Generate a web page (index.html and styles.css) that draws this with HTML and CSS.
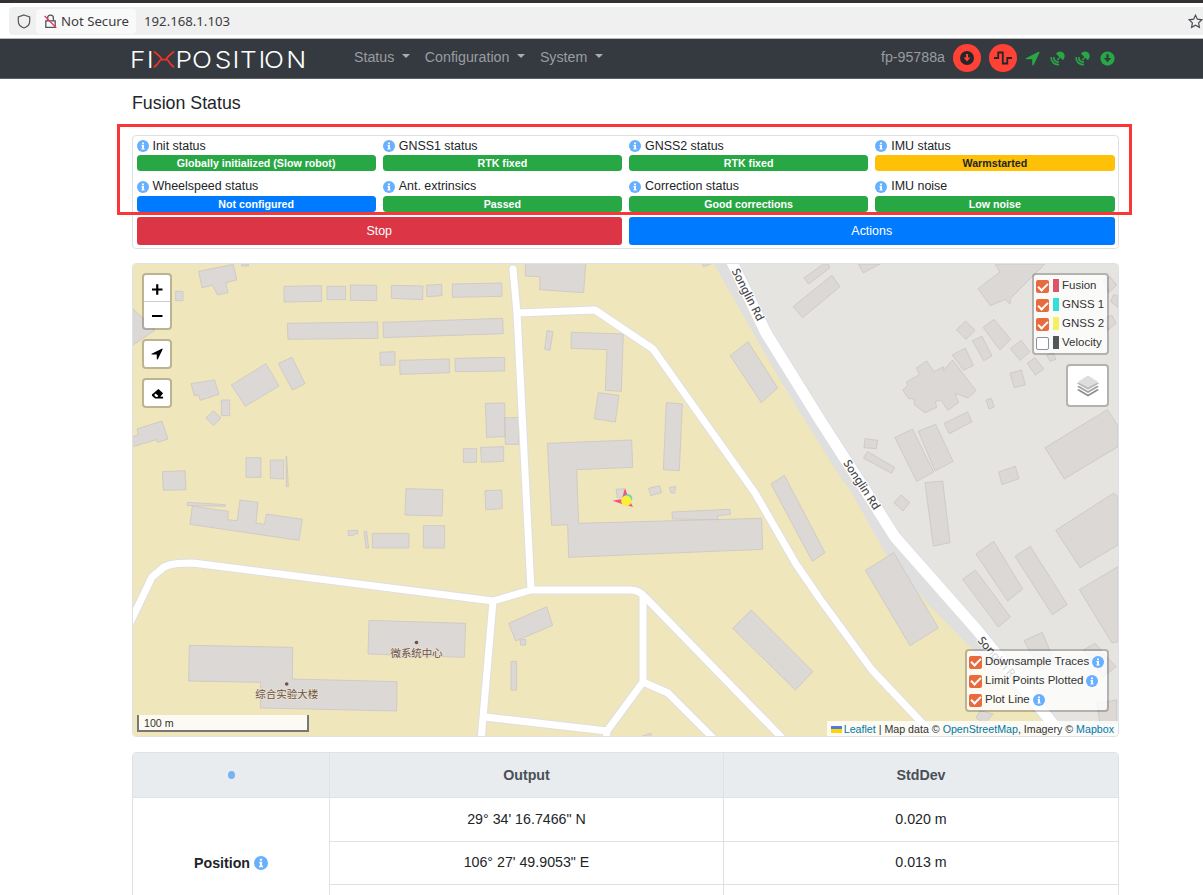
FILE: index.html
```html
<!DOCTYPE html>
<html lang="en">
<head>
<meta charset="utf-8">
<title>Fusion Status</title>
<link rel="stylesheet" href="styles.css">
</head>
<body>
<svg class="defs" aria-hidden="true">
  <symbol id="info" viewBox="0 0 16 16"><circle cx="8" cy="8" r="8" fill="#66b0ff"/><path d="M6.7 3.2h2.6v2.3H6.7zM6 6.7h3.3v4.5h.9v1.6H5.8v-1.6h1V8.3H6z" fill="#fff"/></symbol>
  <symbol id="dish" viewBox="0 0 16 16"><path d="M6.400 3C8.200.2 12 0 14.200 1.800c2 2.200 2 5.400-.4 8L10.900 7.200 9.600 8.500c.2 1-1 1.700-1.700 1-.7-.8-.1-1.800.8-1.700L9.900 6.400z"/><path d="M1.200 6.500c-.3 4.800 3.300 8.400 8.300 8.100M4 6.500c0 3.300 2.200 5.400 5.500 5.400" fill="none" stroke="currentColor" stroke-width="1.800"/></symbol>
  <symbol id="plane" viewBox="0 0 16 16"><path d="M.8 7.800 14.400.9c.8-.3 1.300.2 1 1L9.300 14.800c-.4.900-1.600.7-1.600-.3V8.800H1.800C.6 8.800.1 8.100.8 7.800z"/></symbol>
</svg>

<header class="browser">
  <div class="urlbar">
    <svg class="shield" viewBox="0 0 14 15"><path d="M7 1 12.700 3v4.200c0 3-2.200 5.500-5.700 6.800-3.500-1.300-5.700-3.800-5.700-6.800V3z" fill="none" stroke="#55555a" stroke-width="1.200"/></svg>
    <div class="secure">
      <svg class="lock" viewBox="0 0 13 15"><path d="M1.800 6.800h9.400v6.500H1.800zM3.600 6.800V4a2.900 2.900 0 0 1 5.800 0v2.800" fill="none" stroke="#55555a" stroke-width="1.300"/><path d="M.6 2 12.300 13.800" stroke="#e8395f" stroke-width="1.300"/></svg>
      <span>Not Secure</span>
    </div>
    <span class="address">192.168.1.103</span>
    <svg class="star" viewBox="0 0 15 15"><path d="m7.500 1.200 1.900 4 4.400.6-3.200 3.100.8 4.400-3.900-2.100-3.900 2.100.8-4.400L1.200 5.800l4.400-.6z" fill="none" stroke="#4c4c52" stroke-width="1.200"/></svg>
  </div>
</header>

<nav class="navbar">
  <svg class="logo" viewBox="0 0 176 20" width="176" height="20">
    <text class="logo-text" transform="scale(1.120 1)" y="17.500" x="-.900 14">FI</text>
    <path d="M23 1.500c6.500 5.300 9 8.300 7 8.300s0 2-7 7.400M43 1.500c-6.500 5.300-9 8.300-7 8.300s0 2 7 7.400M29.500 9.600h7" fill="none" stroke="#f0322a" stroke-width="1.800"/>
    <text class="logo-text" transform="scale(1.120 1)" y="17.500" x="39.700 54.400 74.800 90.600 97.300 113.900 118.700 138.700">POSITION</text>
  </svg>
  <ul class="menu">
    <li>Status<i class="caret"></i></li>
    <li>Configuration<i class="caret"></i></li>
    <li>System<i class="caret"></i></li>
  </ul>
  <div class="device">
    <span class="host">fp-95788a</span>
    <span class="alert"><svg viewBox="0 0 16 16" width="14" height="14"><circle cx="8" cy="8" r="8" fill="#23272b"/><path d="M6.800 3.500h2.400v4h2.700L8 12 4.100 7.500h2.700z" fill="#ff4136"/></svg></span>
    <span class="alert"><svg viewBox="0 0 18 14" width="18" height="14"><path d="M0 7h4.200V1.500h4.600v11h4.500V7H18" fill="none" stroke="#23272b" stroke-width="1.800"/></svg></span>
    <svg class="ok" width="15" height="15"><use href="#plane"/></svg>
    <svg class="ok" width="15" height="15"><use href="#dish"/></svg>
    <svg class="ok" width="15" height="15"><use href="#dish"/></svg>
    <svg class="ok" viewBox="0 0 16 16" width="15" height="15"><circle cx="8" cy="8" r="7.600"/><path d="M6.800 3.500h2.400v4h2.700L8 12 4.100 7.500h2.700z" fill="#343a40"/></svg>
  </div>
</nav>

<main class="container">
  <h1 class="title">Fusion Status</h1>

  <section class="card status">
    <div class="grid">
      <div class="cell"><p class="label"><svg class="info"><use href="#info"/></svg>Init status</p><span class="badge green">Globally initialized (Slow robot)</span></div>
      <div class="cell"><p class="label"><svg class="info"><use href="#info"/></svg>GNSS1 status</p><span class="badge green">RTK fixed</span></div>
      <div class="cell"><p class="label"><svg class="info"><use href="#info"/></svg>GNSS2 status</p><span class="badge green">RTK fixed</span></div>
      <div class="cell"><p class="label"><svg class="info"><use href="#info"/></svg>IMU status</p><span class="badge yellow">Warmstarted</span></div>
      <div class="cell"><p class="label"><svg class="info"><use href="#info"/></svg>Wheelspeed status</p><span class="badge blue">Not configured</span></div>
      <div class="cell"><p class="label"><svg class="info"><use href="#info"/></svg>Ant. extrinsics</p><span class="badge green">Passed</span></div>
      <div class="cell"><p class="label"><svg class="info"><use href="#info"/></svg>Correction status</p><span class="badge green">Good corrections</span></div>
      <div class="cell"><p class="label"><svg class="info"><use href="#info"/></svg>IMU noise</p><span class="badge green">Low noise</span></div>
    </div>
    <div class="buttons">
      <button class="btn red">Stop</button>
      <button class="btn blue">Actions</button>
    </div>
    <div class="highlight"></div>
  </section>

  <section class="map">
    <svg class="tiles" viewBox="133 264 985 473">
      <rect x="133" y="264" width="985" height="473" fill="#f0e6bc"/>
      <path d="M714 264 778 377 840 477 850 490 885 553 927 603 970 647 1062 740H1120V262z" fill="#dfdfdf"/>
      <path d="M733 262 766 333 820 420 867 493 895 537 977 630 1070 740H1120V262z" fill="#e5e4e0"/>
      <g class="bld" transform="translate(130 260) scale(.33333)">
        <path d="M206 34 310 13 320 60 288 68 294 98 262 105 248 76 216 83zM335 12h20v6h-20zM137 94h22v28h-22zM8 145 75 210 8 256zM462 79 575 77V124L462 126zM591 79h56v40h-56zM661 75 740 76V122L661 121zM784 76 879 78 878 119 784 115zM889 76 935 73 936 107 891 110zM967 72 1115 69 1116 109 967 112zM472 190 743 186 744 235 474 238zM759 187 1118 175 1120 221 760 233zM750 277 795 275V315L751 316zM809 301 958 297 959 338 810 343zM975 295 1124 292V333L976 335z"/>
        <path d="M183 371 254 360 267 403 211 421 206 405 193 407zM304 375 408 311 447 378 346 439zM445 311 486 292 525 371 487 390zM274 420h25v47h-25zM228 474 250 452 273 474 251 497zM8 530 25 524 21 507 96 483 114 537 83 547 79 539 8 560zM348 593h45v59h-45zM421 600h40v57l-40-2zM468 588h2l5 92h-6zM97 635 165 632 168 689 100 691zM1066 430 1124 429 1125 530 1070 532zM1124 473h42v80h-40zM1000 566h40v41h-40zM1052 562 1121 560V604L1054 607zM828 686 939 689 936 768 825 765zM1065 692 1115 690 1117 746 1067 749z"/>
      </g>
      <g class="bld" transform="translate(500 260) scale(.33333)">
        <path d="M76 10H257L251 98 119 89 120 50 76 48zM605 10h32l-27 10zM141 212 159 215 150 271 134 268zM214 217 370 222 364 394 316 391 321 269 213 265zM295 398 357 406 346 486 283 476zM499 428 547 432 538 632 490 629zM142 550 395 540 398 622 230 629 236 790 785 775 788 868 206 892 203 794 155 796zM348 688 372 686 374 710 352 714zM446 685 479 677 485 698 452 707zM508 682 527 680 524 699 513 699zM516 756 690 748 691 763 652 767 653 779 517 777zM691 287 744 245 833 384 784 428zM813 672 853 646 975 878 937 904zM912 54 970 12H985L989 24 926 72zM879 140 996 46 1020 80 908 173z"/>
      </g>
      <g class="bld" transform="translate(820 260) scale(.33333)">
        <path d="M115 12H180L130 39zM525 12H675L572 115 570 132 556 118 511 137 474 86 540 36zM409 209 437 183 465 211 438 238zM489 202 522 178 572 238 540 270zM457 242 486 229 516 288 491 302zM571 266 604 241 629 276 600 301zM397 285 436 264 460 316 431 331zM248 390 264 376 259 366 298 344 289 324 320 303 342 335 370 320V332L398 300 468 392 444 414 405 400 416 428 384 451 362 420 346 425 350 442 315 458 283 434V418L265 415zM622 310 645 293 671 327 646 345zM570 340 604 330 616 374 583 383zM680 285 700 278 708 298 690 304zM498 420 514 415 523 441 507 447zM372 490 443 456 456 485 388 521zM225 533 277 507 341 636 290 664zM295 514 347 493 399 604 345 633zM135 536 173 541 169 566 132 563zM130 594 143 575 224 622 215 640zM536 636 586 619 597 656 546 674zM675 563 862 449 894 498V560L733 657zM315 668 368 663 390 848 340 858zM850 60 870 50 890 75 866 98zM872 125 880 104 894 108V142zM855 175 875 165 888 190 862 212z"/>
      </g>
      <g class="bld" transform="translate(820 490) scale(.33333)">
        <path d="M222 38 243 15 269 37 249 63zM707 121 880 10 894 20V165L780 233zM778 299 894 230V455L876 459zM468 192 521 154 608 297 563 333zM585 199 631 169 742 344 697 374zM428 268 466 240 571 381 535 411zM612 452 667 427 705 520 660 540zM136 241 221 188 355 414 270 467zM790 480 825 460 888 530 850 560zM830 640 890 630V700H840zM480 662 520 672 494 700 468 684z"/>
      </g>
      <g class="bld" transform="translate(130 490) scale(.33333)">
        <path d="M172 37 286 44V49L188 47H172zM187 48 295 64 293 89 322 92 330 30 384 37 378 99 404 103 409 72 517 88 507 151 180 103zM655 121h28v11h-11l-2 5h-15zM702 124h8l6 50h-8zM727 130h110v44H727zM880 107h64v67h-64zM717 391 1007 400 1003 502 714 492zM178 466 488 472 487 567 801 575 800 663 391 654 392 577 176 573z"/>
      </g>
      <g class="bld" transform="translate(480 490) scale(.33333)">
        <path d="M86 400 200 350 218 406 107 453zM120 450 137 448V465H122zM93 514h17v86H93zM758 415 814 360 999 545 946 600zM482 740 512 730 514 740z"/>
      </g>
      <g class="casing">
        <path d="M513 269 517 313 531 590M517 313 595 310 653 349 755 493 796 564 820 599 872 670 923 724 940 742M130 623 152 577 164 567Q170 564 178 563.500L193 563 493 601 531 590 630 590Q639 590 645 597L785 741M493 601 481 741M485 717 607 731 606 741M643 597V682L607 731M643 682 668 693 716 741"/>
        <path class="main" d="M731 260 766 333 820 420 867 493 895 537 977 630 1066 740"/>
      </g>
      <g class="road">
        <path d="M513 269 517 313 531 590M517 313 595 310 653 349 755 493 796 564 820 599 872 670 923 724 940 742M130 623 152 577 164 567Q170 564 178 563.500L193 563 493 601 531 590 630 590Q639 590 645 597L785 741M493 601 481 741M485 717 607 731 606 741M643 597V682L607 731M643 682 668 693 716 741"/>
        <path class="main" d="M731 260 766 333 820 420 867 493 895 537 977 630 1066 740"/>
      </g>
      <g class="street">
        <text transform="translate(731.500 271) rotate(63)" textLength="57">Songlin Rd</text>
        <text transform="translate(843 463) rotate(57)" textLength="57">Songlin Rd</text>
        <text transform="translate(977 641) rotate(48)" textLength="57">Songlin Rd</text>
      </g>
      <g class="place">
        <circle cx="416.500" cy="642.500" r="1.800"/><text x="416.500" y="657" textLength="52">微系统中心</text>
        <circle cx="286.700" cy="684" r="1.800"/><text x="286.700" y="698" textLength="63">综合实验大楼</text>
      </g>
      <path d="M625 488 628.500 498 633 507 622 504 612.500 500.800 622 499z" fill="#f2557f"/>
      <circle cx="628" cy="498.500" r="4.300" fill="#5fd8c0"/>
      <circle cx="626.300" cy="500.700" r="5.200" fill="#f7ef3c"/>
    </svg>

    <div class="controls left">
      <div class="ctl zoom">
        <svg class="zoom-key" viewBox="0 0 26 26"><path d="M8 14.500h10.500M13.250 9.300v10.400" stroke="#000" stroke-width="2.200"/></svg>
        <svg class="zoom-key" viewBox="0 0 26 26"><path d="M8 14h10.500" stroke="#000" stroke-width="2.200"/></svg>
      </div>
      <div class="ctl key"><svg width="12" height="12"><use href="#plane"/></svg></div>
      <div class="ctl key"><svg viewBox="0 0 14 14" width="13" height="13"><path d="M8 2.200 13 6.700 10 10.500H13V12.500H4.500L1 9.300V8z"/><path d="M5 7 8 9.800 6.500 10.700H5.300L3.400 8.700z" fill="#fff"/></svg></div>
    </div>

    <div class="controls right">
      <div class="ctl legend">
        <div class="row"><i class="check on"></i><i class="swatch fusion"></i>Fusion</div>
        <div class="row"><i class="check on"></i><i class="swatch gnss1"></i>GNSS 1</div>
        <div class="row"><i class="check on"></i><i class="swatch gnss2"></i>GNSS 2</div>
        <div class="row"><i class="check"></i><i class="swatch velocity"></i>Velocity</div>
      </div>
      <div class="ctl layers">
        <svg viewBox="0 0 26 26" width="26" height="26"><path d="M2 17 13 11l11 6-11 6.500z" fill="#8d8d8d"/><path d="M2 15 13 9l11 6-11 6.500z" fill="#fff"/><path d="M2 13.800 13 8l11 5.800-11 6.300z" fill="#a3a3a3"/><path d="M2 11.600 13 6l11 5.600L13 18z" fill="#fff"/><path d="M2 10.400 13 3l11 7.400-11 6.300z" fill="#b9b9b9"/><path d="M2.500 9 13 2.500 23.500 9 13 14.500z" fill="#dedede"/></svg>
      </div>
    </div>

    <div class="controls bottom">
      <div class="ctl options">
        <div class="row"><i class="check on"></i>Downsample Traces<svg class="info"><use href="#info"/></svg></div>
        <div class="row"><i class="check on"></i>Limit Points Plotted<svg class="info"><use href="#info"/></svg></div>
        <div class="row"><i class="check on"></i>Plot Line<svg class="info"><use href="#info"/></svg></div>
      </div>
    </div>
    <div class="scale">100 m</div>
    <div class="attribution"><i class="flag"></i><a>Leaflet</a> | Map data © <a>OpenStreetMap</a>, Imagery © <a>Mapbox</a></div>
  </section>

  <table class="output">
    <thead><tr><th class="c1"><i class="dot"></i></th><th class="c2">Output</th><th>StdDev</th></tr></thead>
    <tbody>
      <tr><th rowspan="3" class="name">Position <svg class="info"><use href="#info"/></svg></th><td>29° 34' 16.7466" N</td><td>0.020 m</td></tr>
      <tr><td>106° 27' 49.9053" E</td><td>0.013 m</td></tr>
      <tr><td></td><td></td></tr>
    </tbody>
  </table>
</main>
</body>
</html>
```

FILE: styles.css
```css
* { box-sizing: border-box; }
html, body { height: 895px; overflow: hidden; }
body { margin: 0; background: #fff; color: #212529; font: 14.22px/1.5 "Liberation Sans", Arial, sans-serif; }
i { font-style: normal; }
svg { flex: none; display: block; }
.defs { position: absolute; width: 0; height: 0; }

/* Browser chrome */
.browser { height: 39px; padding: 4px 0 4px 9px; background: #fff; border-top: 3px solid #353132; border-bottom: 1px solid #b5b7b9; }
.urlbar { display: flex; align-items: center; height: 28px; background: #f0f0f1; border-radius: 4px 0 0 4px; font: 13.200px "Noto Sans", sans-serif; color: #3c3c42; }
.shield { width: 14px; height: 15px; margin: 0 5px 0 8px; }
.secure { display: flex; align-items: center; gap: 4px; width: 100px; height: 25px; padding-left: 8px; background: #f9f9fa; border-radius: 4px; white-space: nowrap; }
.lock { width: 13px; height: 15px; }
.address { margin-left: 8px; }
.star { width: 15px; height: 15px; margin-left: auto; margin-right: 0; }

/* Navigation */
.navbar { display: flex; align-items: center; height: 40px; padding: 0 88px 1px 131px; background: #343a40; border-bottom: 1px solid #5d6165; color: #9a9da0; }
.logo { overflow: visible; margin-top: 3px; }
.logo-text { font: 300 23.500px Inter, "Liberation Sans", sans-serif; fill: #fff; }
.menu { display: flex; gap: 14.500px; margin: 0 0 0 47px; padding: 0; list-style: none; }
.menu li { display: flex; align-items: center; }
.caret { margin: -3px 0 0 8px; border: 4px solid transparent; border-top-color: #aaadb0; border-bottom: 0; }
.device { display: flex; align-items: center; margin-left: auto; }
.host { margin-right: 8px; }
.alert { display: grid; place-items: center; width: 28px; height: 28px; margin-right: 8px; border-radius: 50%; background: #ff4136; }
.ok { margin-right: 10px; color: #28a745; fill: #28a745; }
.ok:last-child { margin-right: 0; }

/* Page */
.container { width: 987px; margin-left: 132px; }
.title { margin: 0; padding-top: 11px; height: 56px; font-size: 17.800px; font-weight: 400; }
.card { border: 1px solid #dee0e2; border-radius: 4px; }
.status { position: relative; height: 114px; padding: 2px 3.500px; }
.grid { display: grid; grid-template-columns: repeat(4, 1fr); column-gap: 7px; }
.cell { height: 40.500px; }
.label { display: flex; align-items: center; gap: 4px; height: 17px; margin: 0; padding-bottom: 1px; font-size: 12.440px; }
.info { width: 12px; height: 12px; }
.badge { display: block; height: 16px; border-radius: 3.500px; font-size: 10.670px; line-height: 16px; font-weight: 700; text-align: center; color: #fff; }
.green { background: #28a745; }
.blue { background: #007bff; }
.yellow { background: #ffc107; color: #212529; }
.red { background: #dc3545; }
.buttons { display: grid; grid-template-columns: 1fr 1fr; gap: 7px; margin-top: -2px; }
.btn { height: 28px; padding: 0; border: 0; border-radius: 3px; color: #fff; font: 12.440px "Liberation Sans", sans-serif; }
.highlight { position: absolute; left: -16px; top: -12px; width: 1015px; height: 91px; border: 3px solid #fb3639; }

/* Map */
.map { position: relative; height: 474px; margin-top: 14px; border: 1px solid #dee2e6; border-radius: 4px; overflow: hidden; font-size: 11.500px; color: #333; }
.tiles { width: 985px; height: 473px; }
.bld { fill: #dcd8d5; stroke: #cbc6c4; stroke-width: 2.500; }
.casing, .road { fill: none; stroke-linecap: round; stroke-linejoin: round; }
.casing { stroke: #dedee4; stroke-width: 9; }
.casing .main { stroke-width: 13; }
.road { stroke: #fff; stroke-width: 7; }
.road .main { stroke-width: 11; }
.street { font: 500 11.500px "Noto Sans", sans-serif; fill: #4a4a4a; stroke: #fff; stroke-width: 2; paint-order: stroke; }
.place { font: 10.500px "Noto Sans CJK SC", sans-serif; fill: #6f5147; text-anchor: middle; }
.place text { stroke: #e8e2d2; stroke-width: 1.500; paint-order: stroke; }
.controls { position: absolute; display: flex; flex-direction: column; gap: 9px; }
.controls.left { left: 9px; top: 9px; }
.controls.right { right: 9px; top: 9px; align-items: flex-end; }
.controls.bottom { right: 9px; bottom: 24px; }
.ctl { border: 2px solid rgba(0, 0, 0, .22); border-radius: 4px; background: #fff; background-clip: padding-box; }
.zoom { width: 30px; height: 57px; }
.zoom-key { width: 26px; height: 26px; }
.zoom-key:first-child { height: 27px; border-bottom: 1px solid #ccc; }
.key { display: grid; place-items: center; width: 30px; height: 30px; }
.legend, .options { background-color: rgba(255, 255, 255, .8); }
.legend { width: 77px; height: 82px; padding: 1px 2px; }
.row { display: flex; align-items: center; height: 19px; white-space: nowrap; }
.check { display: grid; place-items: center; width: 13px; height: 13px; margin-top: 2px; border: 1px solid #8f8f9d; border-radius: 2px; background: #fff; }
.check.on { border: 0; background: #e96a3c; }
.check.on::after { content: ""; width: 8px; height: 4px; margin-top: -2px; border: solid #fff; border-width: 0 0 2px 2px; transform: rotate(-45deg); }
.swatch { width: 6px; height: 13px; margin: 0 3px 0 4px; }
.fusion { background: #df5366; }
.gnss1 { background: #36dfd3; }
.gnss2 { background: #f4f062; }
.velocity { background: #515759; }
.layers { display: grid; place-items: center; width: 43px; height: 43px; }
.options { width: 144px; height: 63px; padding: 1px 2px; }
.options .check { margin-right: 3px; margin-top: 1px; }
.options .info { margin-left: 3px; }
.scale { position: absolute; left: 4px; bottom: 4px; width: 172px; height: 17px; padding-left: 5px; border: 2px solid #777; border-top: 0; background: rgba(255, 255, 255, .8); font-size: 10.670px; line-height: 16px; }
.attribution { position: absolute; right: 0; bottom: 0; display: block; height: 15px; padding: 0 4px; background: rgba(255, 255, 255, .8); font-size: 10.670px; line-height: 16px; white-space: nowrap; }
.attribution a { color: #0078a8; }
.flag { display: inline-block; width: 11px; height: 7px; margin-right: 2px; background: linear-gradient(#4c7be1 50%, #ffd500 50%); }

/* Output table */
.output { width: 987px; margin-top: 15px; table-layout: fixed; border-collapse: separate; border-spacing: 0; border: 1px solid #dee2e6; border-radius: 4px 4px 0 0; overflow: hidden; text-align: center; }
.output th, .output td { height: 43.500px; padding: 0; border-left: 1px solid #dee2e6; border-bottom: 1px solid #dee2e6; }
.output tr > :first-child.c1, .output .name { border-left: 0; }
.output thead th { height: 45px; padding-top: 1px; background: #e9ecef; color: #495057; }
.output .name { padding-top: 2px; }
.c1 { width: 196px; }
.c2 { width: 394px; }
.dot { display: inline-block; width: 7px; height: 8px; border-radius: 50%; background: #74b3f8; vertical-align: 1px; }
.name .info { display: inline-block; width: 14px; height: 14px; vertical-align: -2px; }
```
